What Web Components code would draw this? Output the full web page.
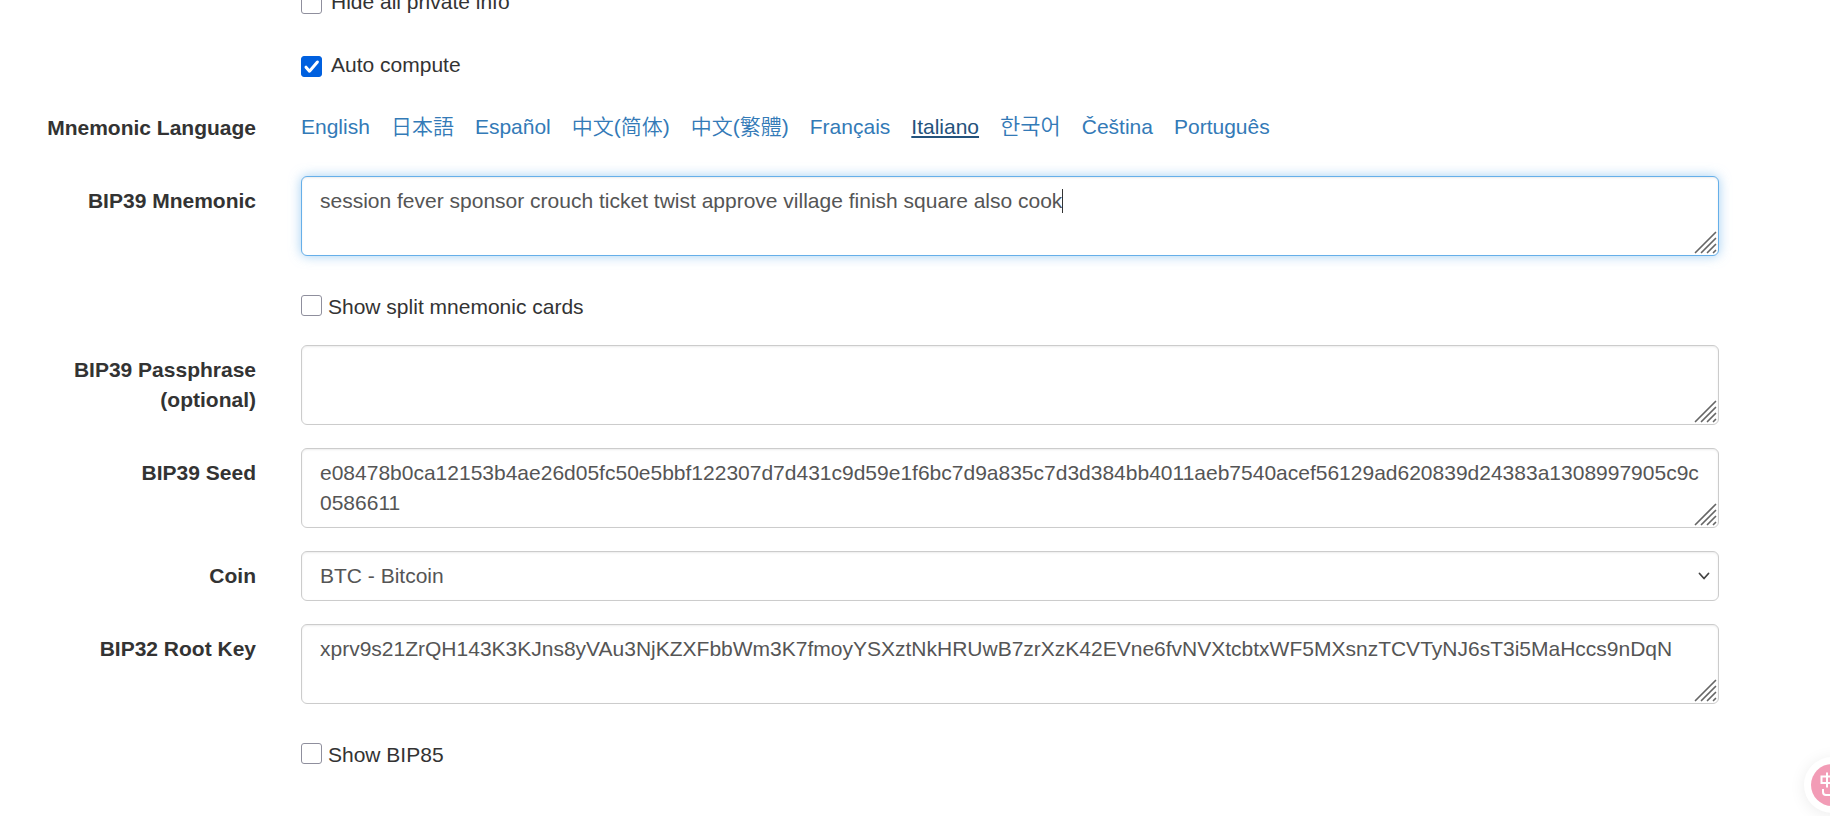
<!DOCTYPE html>
<html lang="en">
<head>
<meta charset="utf-8">
<title>BIP39 - Mnemonic Code</title>
<style>
  body {
    margin: 0;
    background: #fff;
    color: #333;
    font: 21px/30px "Liberation Sans", "Noto Sans CJK JP", sans-serif;
  }
</style>
</head>
<body>
<mnemonic-form>
  <check-field spaced>Hide all private info</check-field>
  <check-field spaced checked>Auto compute</check-field>
  <language-links label="Mnemonic Language">
    <a href="#english">English</a>
    <a href="#japanese" lang="ja">日本語</a>
    <a href="#spanish">Español</a>
    <a href="#chinese_simplified" lang="zh-Hans">中文(简体)</a>
    <a href="#chinese_traditional" lang="zh-Hant">中文(繁體)</a>
    <a href="#french">Français</a>
    <a href="#italian" class="active">Italiano</a>
    <a href="#korean" lang="ko">한국어</a>
    <a href="#czech">Čeština</a>
    <a href="#portuguese">Português</a>
  </language-links>
  <text-field active value="session fever sponsor crouch ticket twist approve village finish square also cook">BIP39 Mnemonic</text-field>
  <check-field>Show split mnemonic cards</check-field>
  <text-field value="">BIP39 Passphrase (optional)</text-field>
  <text-field value="e08478b0ca12153b4ae26d05fc50e5bbf122307d7d431c9d59e1f6bc7d9a835c7d3d384bb4011aeb7540acef56129ad620839d24383a1308997905c9c0586611">BIP39 Seed</text-field>
  <select-field value="BTC - Bitcoin">Coin</select-field>
  <text-field value="xprv9s21ZrQH143K3KJns8yVAu3NjKZXFbbWm3K7fmoyYSXztNkHRUwB7zrXzK42EVne6fvNVXtcbtxWF5MXsnzTCVTyNJ6sT3i5MaHccs9nDqN">BIP32 Root Key</text-field>
  <check-field>Show BIP85</check-field>
</mnemonic-form>
<translate-button></translate-button>

<script>
const rowStyles = `
  :host {
    display: grid;
    grid-template-columns: 256px minmax(0, 1fr);
    column-gap: 45px;
  }
  * { box-sizing: border-box; }
  .label {
    padding-top: 10px;
    padding-left: 36px;
    font-weight: bold;
    text-align: right;
  }
  .control { position: relative; grid-column: 2; }
  textarea, select {
    display: block;
    width: 100%;
    margin: 0;
    padding: 9px 18px;
    border: 1px solid #ccc;
    border-radius: 6px;
    background: #fff;
    color: #555;
    font: inherit;
    box-shadow: inset 0 1px 2px rgba(0, 0, 0, .075);
    outline: none;
    appearance: none;
  }
`;

class BaseElement extends HTMLElement {
  render(html) {
    this.attachShadow({ mode: "open" }).innerHTML = html;
    return this.shadowRoot;
  }
}

customElements.define("mnemonic-form", class extends BaseElement {
  connectedCallback() {
    this.render(`
      <style>
        :host { display: block; margin-top: -23px; }
        form { display: flex; flex-direction: column; gap: 23px; padding-right: 111px; }
      </style>
      <form><slot></slot></form>`);
  }
});

customElements.define("check-field", class extends BaseElement {
  connectedCallback() {
    const checked = this.hasAttribute("checked") ? "checked" : "";
    this.render(`
      <style>
        ${rowStyles}
        .control { display: flex; align-items: flex-start; gap: 6px; padding-top: 13px; }
        input {
          flex: none;
          width: 21px;
          height: 21px;
          margin: 3px 0 0;
          border: 1px solid #8f8f9d;
          border-radius: 3px;
          background: #fff;
          appearance: none;
        }
        input:checked {
          border-color: #0060df;
          background: #0060df url('data:image/svg+xml,<svg xmlns="http://www.w3.org/2000/svg" viewBox="0 0 21 21"><path d="M5 11.2l3.5 4L16.4 6" fill="none" stroke="white" stroke-width="3" stroke-linecap="round" stroke-linejoin="round"/></svg>') center / 21px 21px;
        }
        :host([spaced]) .control { gap: 9px; padding-top: 10px; }
        :host([spaced]) input { margin-top: 6px; }
      </style>
      <div class="control">
        <input type="checkbox" id="box" ${checked}>
        <label for="box"><slot></slot></label>
      </div>`);
  }
});

customElements.define("language-links", class extends BaseElement {
  connectedCallback() {
    this.render(`
      <style>
        ${rowStyles}
        nav { display: flex; flex-wrap: wrap; gap: 0 21px; padding: 9px 0 11px; }
        ::slotted(a) { color: #337ab7; text-decoration: none; font-weight: 350; }
        ::slotted(a[lang="zh-Hans"]) { font-family: "Liberation Sans", "Noto Sans CJK SC", sans-serif; }
        ::slotted(a[lang="zh-Hant"]) { font-family: "Liberation Sans", "Noto Sans CJK TC", sans-serif; }
        ::slotted(a[lang="ko"]) { font-family: "Liberation Sans", "Noto Sans CJK KR", sans-serif; font-size: 22px; }
        ::slotted(a.active) { color: #23527c; text-decoration: underline; text-decoration-thickness: 2px; text-underline-offset: 2px; }
      </style>
      <div class="label" id="name">${this.getAttribute("label")}</div>
      <nav aria-labelledby="name"><slot></slot></nav>`);
  }
});

customElements.define("text-field", class extends BaseElement {
  connectedCallback() {
    const active = this.hasAttribute("active");
    const root = this.render(`
      <style>
        ${rowStyles}
        textarea { height: 80px; resize: none; overflow: hidden; caret-color: transparent; word-break: break-word; }
        svg { position: absolute; right: 2px; bottom: 2px; width: 23px; height: 23px; pointer-events: none; }
        .caret { position: absolute; top: 13px; width: 1px; height: 24px; background: #333; }
        :host([active]) textarea {
          border-color: #66afe9;
          box-shadow: inset 0 1px 2px rgba(0, 0, 0, .075), 0 0 12px rgba(102, 175, 233, .6);
        }
      </style>
      <label class="label" for="text"><slot></slot></label>
      <div class="control">
        <textarea id="text" rows="2" spellcheck="false"></textarea>
        <svg viewBox="0 0 23 23" fill="none" stroke="#666" stroke-width="1.7" stroke-linecap="round" aria-hidden="true">
          <path d="M1.500 21.500L21.500 1.500M7.500 21.500L21.500 7.500M13.500 21.500L21.500 13.500M19.500 21.500L21.500 19.500"/>
        </svg>
        ${active ? '<span class="caret"></span>' : ""}
      </div>`);
    const area = root.querySelector("textarea");
    area.value = this.getAttribute("value");
    if (active) {
      const caret = root.querySelector(".caret");
      const pen = document.createElement("canvas").getContext("2d");
      const place = () => {
        pen.font = '21px "Liberation Sans"';
        const typed = area.value.slice(0, area.selectionEnd);
        caret.style.left = Math.round(19 + pen.measureText(typed).width) + "px";
      };
      area.setSelectionRange(area.value.length, area.value.length);
      area.addEventListener("input", place);
      place();
    }
  }
});

customElements.define("select-field", class extends BaseElement {
  connectedCallback() {
    this.render(`
      <style>
        ${rowStyles}
        select { height: 50px; }
        svg { position: absolute; right: 9px; top: 19px; width: 12px; height: 12px; pointer-events: none; }
      </style>
      <label class="label" for="choice"><slot></slot></label>
      <div class="control">
        <select id="choice"><option>${this.getAttribute("value")}</option></select>
        <svg viewBox="0 0 12 12" fill="none" stroke="#444" stroke-width="1.8" stroke-linecap="round" stroke-linejoin="round" aria-hidden="true">
          <path d="M1.500 3.500L6 8.500L10.500 3.500"/>
        </svg>
      </div>`);
  }
});

customElements.define("translate-button", class extends BaseElement {
  connectedCallback() {
    this.render(`
      <style>
        :host { position: fixed; right: -30px; bottom: 3px; display: block; }
        button {
          display: block;
          width: 56px;
          height: 56px;
          padding: 7px;
          border: 0;
          border-radius: 50%;
          background: #fff;
          box-shadow: 0 2px 16px rgba(0, 0, 0, .08);
        }
        svg { display: block; width: 42px; height: 42px; }
      </style>
      <button type="button" aria-label="Translate">
        <svg viewBox="0 0 42 42" fill="none" stroke="#fff" stroke-width="2">
          <circle cx="21" cy="21" r="21" fill="#f29cb6" stroke="none"/>
          <path d="M10.500 12.500h11v6.500h-11zM16 8.500v15"/>
          <path d="M12 25v3q0 3 3 3h6"/>
        </svg>
      </button>`);
  }
});
</script>
</body>
</html>
